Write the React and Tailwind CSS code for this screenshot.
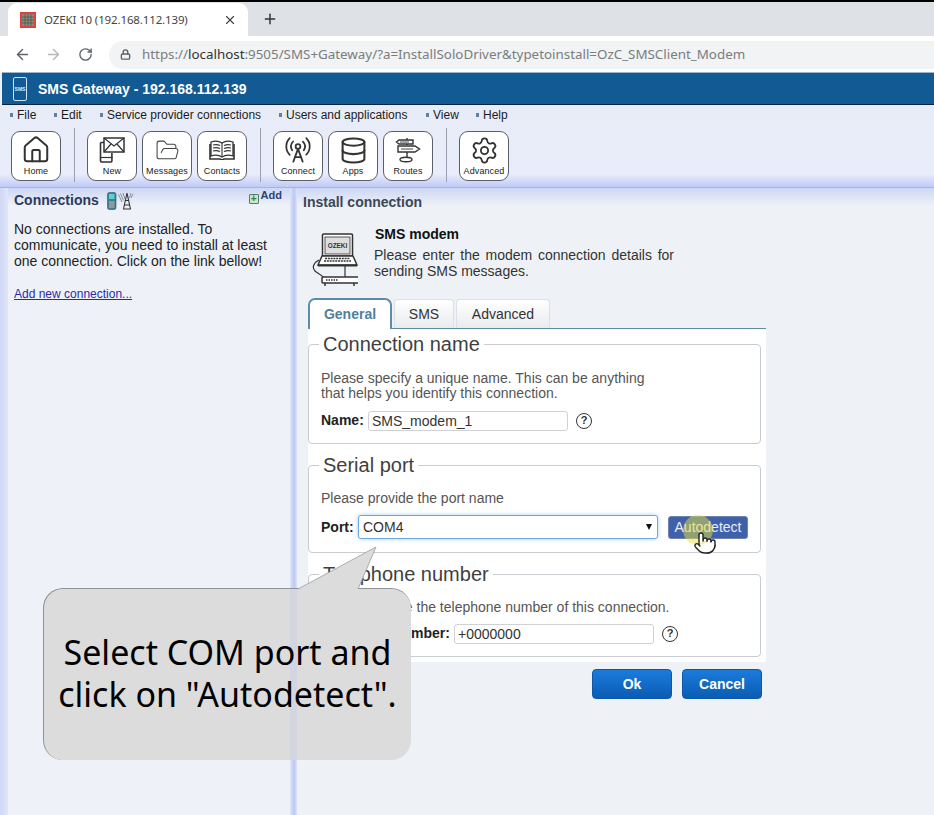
import React from "react";
import { ArrowLeft, ArrowRight, RotateCw, Lock, X, Plus, House, FolderOpen, Database, Settings, RadioTower, Pointer } from "lucide-react";

const Sep = () => <div className="w-px h-[54px] bg-[#9aa0ad] self-start mt-[-3px]" />;

const ToolBtn = ({ label, children }) => (
  <div className="w-[50px] h-[50px] shrink-0 bg-white border border-[#5b5f66] rounded-[9px] flex flex-col items-center">
    <div className="h-[33px] w-full flex items-center justify-center pt-[3px]">{children}</div>
    <div className="text-[9px] leading-[11px] text-[#222] tracking-[0.1px] mt-[1px] whitespace-nowrap">{label}</div>
  </div>
);

const MenuItem = ({ label, w }) => (
  <div className={`flex items-center gap-[4px] text-[12px] text-[#1c1c1c] ${w}`}>
    <span className="w-[3px] h-[4px] bg-[#5c83a6] shrink-0" />
    <span className="whitespace-nowrap">{label}</span>
  </div>
);

const Help = () => (
  <span className="w-[16px] h-[16px] rounded-full border-[1.5px] border-[#333] flex items-center justify-center text-[11px] font-bold text-[#333] leading-none shrink-0">?</span>
);

const NewIcon = () => (
  <svg width="26" height="26" viewBox="0 0 26 26" fill="none" stroke="#333" strokeWidth="1.2">
    <path d="M1.5 5.5h10M1.5 5.5v18.5a1.2 1.2 0 0 0 1.2 1h9a1.2 1.2 0 0 0 1.2-1V16" strokeWidth="1.6" />
    <path d="M1.5 20.5h12" />
    <rect x="5" y="1" width="20" height="14" fill="#fff" strokeWidth="1.5" />
    <path d="M5 1l10 8 10-8M5 15l7-8M25 15l-7-8" />
  </svg>
);

const BookIcon = () => (
  <svg width="26" height="20" viewBox="0 0 26 20" fill="none" stroke="#333" strokeWidth="1.1">
    <path d="M13 3C10 1 5 1 2 2v14c3-1 8-1 11 1 3-2 8-2 11-1V2c-3-1-8-1-11 1z" fill="#fff" strokeWidth="1.3" />
    <path d="M4 5c2.500-.6 5-.4 7 .5M4 8c2.500-.6 5-.4 7 .5M4 11c2.500-.6 5-.4 7 .5M22 5c-2.500-.6-5-.4-7 .5M22 8c-2.500-.6-5-.4-7 .5M22 11c-2.500-.6-5-.4-7 .5" />
    <path d="M1 4v15h10l2 1 2-1h10V4" fill="none" strokeWidth="1.6" />
    <path d="M13 3v14" />
  </svg>
);

const RoutesIcon = () => (
  <svg width="26" height="26" viewBox="0 0 26 26" fill="none" stroke="#333" strokeWidth="1.4">
    <path d="M12 1v7M12 15v7" />
    <path d="M4 3h14v4H4L1.500 5z" fill="#fff" />
    <path d="M3 9h17l4.500 3-4.500 3H3z" fill="#fff" />
    <ellipse cx="11" cy="22.500" rx="6" ry="2.200" fill="#fff" />
    <path d="M5 5h9M6 12h12" strokeWidth="0.9" />
  </svg>
);

const TowerSmall = () => (
  <svg width="28" height="19" viewBox="0 0 28 19" fill="none">
    <rect x="0.500" y="1.500" width="8.500" height="17" rx="1.800" fill="#3f7f8e" stroke="#33525c" strokeWidth="0.600" />
    <rect x="2" y="3" width="5.500" height="5" fill="#58d0e0" />
    <rect x="2" y="10" width="5.500" height="7" fill="#8a9ca2" />
    <path d="M20 2l-3.500 16M20 2l3.500 16M17.500 14h5M18.500 9.500h3M16 18h8" stroke="#333" strokeWidth="1.100" />
    <path d="M16 2l2 6M13.500 2.500l3 7M11.500 3.500l3.500 7.500M24 2l-1.500 5M26 3l-2 4" stroke="#8b8f93" strokeWidth="1" />
  </svg>
);

const Laptop = () => (
  <svg width="46" height="54" viewBox="0 0 46 54" fill="none" stroke="#333" strokeWidth="1.200">
    <rect x="10.500" y="1" width="30" height="22" rx="1" fill="#fff" strokeWidth="1.500" />
    <rect x="13" y="4" width="25" height="17" fill="#dedede" strokeWidth="0.800" />
    <text x="25.500" y="14.500" textAnchor="middle" fontSize="6.400" fontWeight="700" fontFamily="Liberation Sans" fill="#333" stroke="none">OZEKI</text>
    <path d="M10 23h31l4 9H6z" fill="#fff" strokeWidth="1.500" />
    <path d="M13 25.500h25M12 28h27" strokeWidth="1.600" strokeDasharray="2 0.800" />
    <path d="M6 32.500h39" strokeWidth="1.800" />
    <path d="M7 27C1 30 0 35 3 38c3 3 8 4 9 8" />
    <path d="M33 33v11" />
    <rect x="11" y="44" width="37" height="6" rx="1" transform="translate(-1 0)" fill="#fff" strokeWidth="1.500" />
    <path d="M14 47h12" strokeWidth="1.500" strokeDasharray="1.500 1" />
    <path d="M13 50v3M42 50v3" strokeWidth="1.500" />
  </svg>
);

const Field = ({ title, h, children }) => (
  <fieldset className={`border border-[#c9ccd0] rounded-[4px] w-[453px] px-[12px] ${h}`}>
    <legend className="ml-[-2px] px-[4px] text-[20px] leading-[24px] text-[#3f3f3f]">{title}</legend>
    {children}
  </fieldset>
);

export default function App() {
  return (
    <div className="relative w-[934px] h-[815px] overflow-hidden flex flex-col bg-[#eef2f6] font-['Liberation_Sans',Arial,sans-serif] text-[#222]">
      <div className="h-[2px] bg-black shrink-0" />

      <div className="h-[34px] shrink-0 bg-[#dee1e6] flex items-end pl-[8px]">
        <div className="w-[240px] h-[33px] bg-white rounded-t-[9px] flex items-center pl-[12px] pr-[11px] font-['Noto_Sans',sans-serif]">
          <svg width="16" height="16" viewBox="0 0 16 16" className="shrink-0">
            <rect width="16" height="16" fill="#e2403c" />
            <rect x="2" y="2" width="12" height="12" fill="#8a8a7e" />
            <path d="M5 2v12M8 2v12M11 2v12M2 5h12M2 8h12M2 11h12" stroke="#4e5048" strokeWidth="0.700" />
          </svg>
          <span className="ml-[8px] text-[11.500px] tracking-[-0.13px] text-[#444] whitespace-nowrap flex-1">OZEKI 10 (192.168.112.139)</span>
          <X size={14} strokeWidth={2} className="text-[#444]" />
        </div>
        <Plus size={16} strokeWidth={2.200} className="ml-[14px] mb-[9px] text-[#333]" />
      </div>

      <div className="h-[36px] shrink-0 bg-white flex items-center pl-[14px] pt-[1px]">
        <ArrowLeft size={17} strokeWidth={2} className="text-[#5f6368]" />
        <ArrowRight size={17} strokeWidth={2} className="ml-[14px] text-[#b5b8bb]" />
        <RotateCw size={15} strokeWidth={2.200} className="ml-[16px] text-[#5f6368]" />
        <div className="ml-[16px] flex-1 h-[28px] bg-[#f1f3f4] rounded-l-full flex items-center pl-[11px]">
          <Lock size={11} strokeWidth={3} className="text-[#5f6368]" />
          <span className="ml-[11px] text-[13.370px] text-[#7a7d80] whitespace-nowrap font-['Noto_Sans',sans-serif]">
            https://<span className="text-[#333]">localhost</span>:9505/SMS+Gateway/?a=InstallSoloDriver&amp;typetoinstall=OzC_SMSClient_Modem
          </span>
        </div>
      </div>

      <div className="h-[33px] shrink-0 bg-[#125a94] border-t border-[#9db6cc] border-b border-b-[#0b2340] flex items-center ml-[2px] pl-[11px] pt-[1px]">
        <div className="w-[14px] h-[24px] border border-[#cfe2f2] rounded-[2px] flex items-center justify-center text-[5px] font-bold text-[#dcebf7] leading-none">SMS</div>
        <span className="ml-[11px] text-[14px] font-bold text-white whitespace-nowrap">SMS Gateway - 192.168.112.139</span>
      </div>

      <div className="h-[83px] shrink-0 bg-[linear-gradient(#e8ecf7_0%,#e9ecfb_84%,#bfcbf8_100%)] border-b border-[#aab4d8] pl-[10px]">
        <div className="h-[20px] mb-[6px] flex items-center">
          <MenuItem label="File" w="w-[44px]" />
          <MenuItem label="Edit" w="w-[46px]" />
          <MenuItem label="Service provider connections" w="w-[179px]" />
          <MenuItem label="Users and applications" w="w-[147px]" />
          <MenuItem label="View" w="w-[50px]" />
          <MenuItem label="Help" w="w-[40px]" />
        </div>
        <div className="flex items-start pl-[1px]">
          <ToolBtn label="Home"><House size={30} strokeWidth={1.600} className="text-[#333]" /></ToolBtn>
          <div className="w-[13px]" /><Sep /><div className="w-[12px]" />
          <div className="flex gap-[5px]">
            <ToolBtn label="New"><NewIcon /></ToolBtn>
            <ToolBtn label="Messages"><FolderOpen size={25} strokeWidth={1} className="text-[#444]" /></ToolBtn>
            <ToolBtn label="Contacts"><BookIcon /></ToolBtn>
          </div>
          <div className="w-[13px]" /><Sep /><div className="w-[12px]" />
          <div className="flex gap-[5px]">
            <ToolBtn label="Connect"><RadioTower size={28} strokeWidth={1.500} className="text-[#333]" /></ToolBtn>
            <ToolBtn label="Apps"><Database size={29} strokeWidth={1.700} className="text-[#333]" /></ToolBtn>
            <ToolBtn label="Routes"><RoutesIcon /></ToolBtn>
          </div>
          <div className="w-[13px]" /><Sep /><div className="w-[12px]" />
          <ToolBtn label="Advanced"><Settings size={29} strokeWidth={1.500} className="text-[#333]" /></ToolBtn>
        </div>
      </div>

      <div className="flex-1 flex min-h-0 bg-[linear-gradient(90deg,#cfd8f6_0px,#dfe5f8_8px,transparent_8px)]">
        <div className="w-[282px] ml-[8px] shrink-0 bg-[linear-gradient(#cdd7f5_0px,#eef2f8_18px)] relative pl-[6px]">
          <div className="flex items-center h-[24px]">
            <span className="text-[14px] font-bold text-[#2c3a5c]">Connections</span>
            <span className="ml-[8px]"><TowerSmall /></span>
            <div className="ml-auto mr-[8px] flex items-start self-start mt-[3px]">
              <span className="w-[10px] h-[10px] mt-[3px] bg-[#cfe3cc] border border-[#5a7a68] rounded-[1px] flex items-center justify-center text-[10px] leading-none font-bold text-[#2c8a3a]">+</span>
              <span className="ml-[2px] mt-[-2px] text-[11px] leading-[12px] font-bold text-[#2c4470]">Add</span>
            </div>
          </div>
          <p className="mt-[9px] w-[270px] text-[14px] leading-[16px] text-[#222]">
            No connections are installed. To communicate, you need to install at least one connection. Click on the link bellow!
          </p>
          <a className="block mt-[18px] text-[12px] leading-[14px] underline text-[#2a2aa8]">Add new connection...</a>
        </div>

        <div className="w-[7px] shrink-0 bg-[linear-gradient(90deg,#dfe5f8,#bcc8f2_60%,#dde3f7)]" />

        <div className="flex-1 min-w-0 bg-[linear-gradient(#cdd7f5_0px,#eef2f6_18px)] pl-[6px] pt-[7px]">
          <div className="text-[14px] leading-[14px] font-bold text-[#3b4757]">Install connection</div>
          <div className="flex mt-[16px] ml-[9px]">
            <div className="mt-[8px] shrink-0"><Laptop /></div>
            <div className="ml-[16px] w-[300px]">
              <div className="text-[14px] leading-[16px] font-bold text-[#111] ml-[1px] mt-[1px]">SMS modem</div>
              <p className="mt-[5px] text-[14px] leading-[16px] text-[#333] text-justify">
                Please enter the modem connection details for sending SMS messages.
              </p>
            </div>
          </div>

          <div className="ml-[5px] mt-[10px] w-[458px] h-[32px] flex items-end gap-[2px] border-b border-[#5f8ba0]">
            <div className="w-[84px] h-[31px] mb-[-1px] pb-[1px] bg-white border-2 border-b-0 border-[#5f8ba8] rounded-t-[7px] flex items-center justify-center text-[14px] font-bold text-[#4f7f9f]">General</div>
            <div className="w-[60px] h-[29px] bg-[linear-gradient(#fff,#e9ebee)] border border-b-0 border-[#dcdfe3] rounded-t-[4px] flex items-center justify-center text-[14px] text-[#333]">SMS</div>
            <div className="w-[94px] h-[29px] bg-[linear-gradient(#fff,#e9ebee)] border border-b-0 border-[#dcdfe3] rounded-t-[4px] flex items-center justify-center text-[14px] text-[#333]">Advanced</div>
          </div>

          <div className="ml-[5px] w-[458px] h-[333px] bg-white pt-[3px] flex flex-col gap-[9px]">
            <Field title="Connection name" h="h-[112px]">
              <p className="mt-[15px] text-[14px] leading-[15px] text-[#555] w-[340px]">
                Please specify a unique name. This can be anything that helps you identify this connection.
              </p>
              <div className="flex items-center mt-[9px]">
                <span className="w-[47px] text-[14px] font-bold text-[#222]">Name:</span>
                <div className="w-[200px] h-[20px] bg-white border border-[#cfd1d4] rounded-[3px] pl-[3px] text-[14px] leading-[18px] text-[#333]">SMS_modem_1</div>
                <span className="ml-[8px]"><Help /></span>
              </div>
            </Field>

            <Field title="Serial port" h="h-[100px]">
              <p className="mt-[13px] text-[14px] leading-[16px] text-[#555]">Please provide the port name</p>
              <div className="flex items-center mt-[9px]">
                <span className="w-[37px] text-[14px] font-bold text-[#222]">Port:</span>
                <div className="w-[300px] h-[24px] bg-white border border-[#6ea6e0] rounded-[3px] shadow-[0_0_4px_#a9cdf0] pl-[4px] pr-[5px] flex items-center justify-between text-[14px] text-[#333]">
                  <span>COM4</span>
                  <span className="w-0 h-0 border-x-[3.500px] border-x-transparent border-t-[6px] border-t-[#111]" />
                </div>
                <div className="relative ml-[10px] w-[80px] h-[23px] bg-[#3f60aa] rounded-[3px] border border-[#6f82b0] flex items-center justify-center text-[14px] text-[#e8edf7]">
                  Autodetect
                  <span className="absolute left-[14px] top-[-2px] w-[30px] h-[30px] rounded-full bg-[#e6e23e]/50" />
                  <Pointer size={24} strokeWidth={1.400} className="absolute left-[24px] top-[14px] text-[#222] fill-white" />
                </div>
              </div>
            </Field>

            <Field title="Telephone number" h="h-[95px]">
              <p className="mt-[13px] text-[14px] leading-[16px] text-[#555] whitespace-nowrap ml-[-1px]">Please provide the telephone number of this connection.</p>
              <div className="flex items-center mt-[8px]">
                <span className="w-[133px] text-[14px] font-bold text-[#222] whitespace-nowrap">Telephone number:</span>
                <div className="w-[200px] h-[20px] bg-white border border-[#cfd1d4] rounded-[3px] pl-[3px] text-[14px] leading-[18px] text-[#333]">+0000000</div>
                <span className="ml-[8px]"><Help /></span>
              </div>
            </Field>
          </div>

          <div className="ml-[289px] mt-[7px] flex gap-[10px]">
            <div className="w-[80px] h-[30px] rounded-[4px] bg-[linear-gradient(#1b7bdc,#0b5cb4)] border border-[#0d58a6] flex items-center justify-center text-[14px] font-bold text-white">Ok</div>
            <div className="w-[80px] h-[30px] rounded-[4px] bg-[linear-gradient(#1b7bdc,#0b5cb4)] border border-[#0d58a6] flex items-center justify-center text-[14px] font-bold text-white">Cancel</div>
          </div>
        </div>
      </div>

      <div className="absolute left-[43px] top-[588px] w-[368px] h-[172px] rounded-[20px] bg-[#dcdcdc] border-t border-l border-[#8f9296] flex items-center justify-center pb-[4px] text-center font-['Noto_Sans',sans-serif] text-[34px] leading-[42px] text-black">
        <svg width="82" height="44" viewBox="0 0 82 44" className="absolute left-[253px] top-[-43px]">
          <path d="M1 43L79 1 61 43z" fill="#dcdcdc" />
          <path d="M1 43L79 1 61 43" fill="none" stroke="#9a9c9f" strokeWidth="0.800" />
        </svg>
        <span className="absolute left-[246px] top-0 bottom-0 w-[7px] bg-[#c6cde8]/40" />
        <div className="relative">Select COM port and<br />click on "Autodetect".</div>
      </div>
    </div>
  );
}
